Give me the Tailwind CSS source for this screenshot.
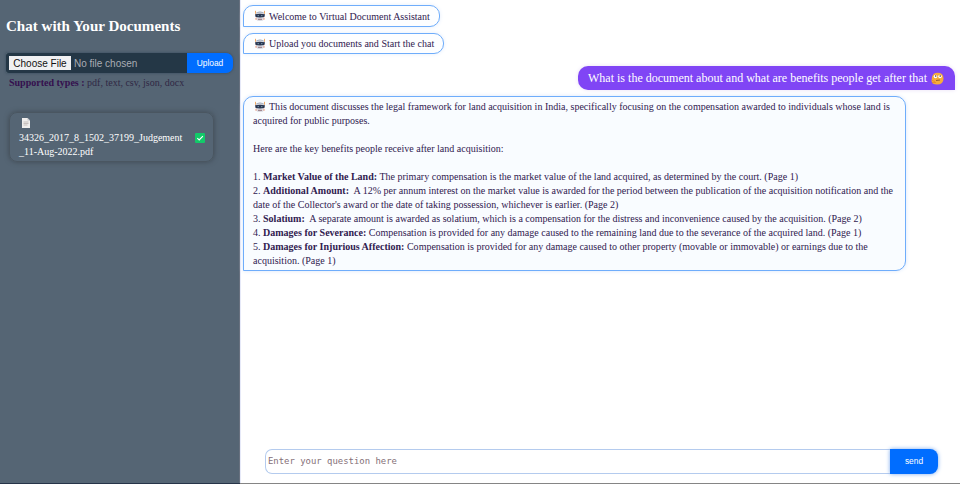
<!DOCTYPE html>
<html lang="en">
<head>
<meta charset="utf-8">
<title>Virtual Document Assistant</title>
<script src="https://cdn.jsdelivr.net/npm/@tailwindcss/browser@4"></script>
</head>
<body class="h-[484px] w-[960px] overflow-hidden bg-white font-['Liberation_Serif',serif] text-[#30204f]">
<svg class="hidden">
  <symbol id="robot" viewBox="0 0 12 12">
    <path d="M1.500 .8v3M10.500 .8v3" stroke="#eea968" stroke-width="1"/>
    <path d="M2 3.500Q2 1.500 6 1.500Q10 1.500 10 3.500V9.500Q9 11 6 11Q3 11 2 9.500Z" fill="#d9dbe2"/>
    <path d="M2.500 2.800Q6 1.200 9.500 2.800" stroke="#a9b2c0" fill="none"/>
    <path d="M1 4.200Q6 3.400 11 4.200L10.400 7Q6 7.800 1.600 7Z" fill="#2b3650"/>
    <circle cx="4.200" cy="5.600" r=".7" fill="#7fa9bd"/><circle cx="7.800" cy="5.600" r=".7" fill="#7fa9bd"/>
    <path d="M2 7.800v2M10 7.800v2" stroke="#f0a58c" stroke-width="1.200"/>
    <path d="M4 9.300h4" stroke="#8c6770" stroke-width=".9"/>
  </symbol>
</svg>
<div class="flex h-[483px]">
  <aside class="w-[240px] shrink-0 border-r border-[#68717f] bg-[#556574] pt-[16px] pl-[6px]">
    <h1 class="h-[20px] text-[15.05px] leading-[20px] font-bold whitespace-nowrap text-white">Chat with Your Documents</h1>
    <div class="mt-[17px] flex h-[20px] w-[227px] rounded-r-[7px] shadow-[0_0_3px_#34495b]">
      <div class="flex w-[181px] items-center rounded-l-[3px] bg-[#243746] pl-[3px] font-['Liberation_Sans',sans-serif] text-[10px] whitespace-nowrap">
        <span class="flex h-[14px] w-[62px] items-center justify-center bg-[#f0f0f2] pt-px text-[#111]">Choose File</span>
        <span class="mt-px ml-[3px] text-[#a9adb4]">No file chosen</span>
      </div>
      <button class="w-[46px] rounded-r-[7px] bg-[#006dff] font-['Liberation_Sans',sans-serif] text-[8.4px] text-white">Upload</button>
    </div>
    <p class="mt-[3px] ml-[3px] h-[14px] text-[10px] leading-[14px] whitespace-nowrap text-[#302844]"><b class="text-[#34104e]">Supported types :</b> pdf, text, csv, json, docx</p>
    <div class="mt-[22px] ml-[3px] flex h-[50px] w-[205px] items-center rounded-[8px] border border-[#4a5661] pt-[2px] pl-[9px] shadow-[0_0_5px_#3f4a53]">
      <div class="w-[164px] text-[10px] leading-[14px] whitespace-nowrap text-white">
        <div class="flex h-[14px] items-center pl-[3px]">
          <svg class="-mt-[2px] h-[10px] w-[8px]" viewBox="0 0 8 10"><path d="M0 0h5.500L8 2.500V10H0Z" fill="#f0eeed"/><path d="M5.500 0v2.500H8" fill="#c2c5cc"/><path d="M1.500 4h5M1.500 5.500h5M1.500 7h4" stroke="#b3aaa7" stroke-width=".7"/></svg>
        </div>
        <div>34326_2017_8_1502_37199_Judgement</div>
        <div>_11-Aug-2022.pdf</div>
      </div>
      <svg class="ml-[12px] h-[10px] w-[10px] shrink-0" viewBox="0 0 10 10"><rect width="10" height="10" rx="1" fill="#12c969"/><path d="M2.300 5.200 4.200 7 7.900 3.200" stroke="white" stroke-width="1.100" fill="none"/></svg>
    </div>
  </aside>
  <main class="flex flex-1 flex-col border-l border-[#e6e9f8] pt-[5px] pl-[2px]">
    <div class="flex h-[22px] w-[197px] items-center rounded-[10px] rounded-bl-none border border-[#6fadfb] bg-[#fdfeff] pl-[10px] text-[10.03px] whitespace-nowrap shadow-[0_0_4px_#e4edfb]"><svg class="mr-[3px] h-[12px] w-[12px] shrink-0"><use href="#robot"/></svg><span class="mt-px">Welcome to Virtual Document Assistant</span></div>
    <div class="mt-[6px] flex h-[21px] w-[201px] items-center rounded-[10px] rounded-bl-none border border-[#6fadfb] bg-[#fdfeff] pl-[10px] text-[10.03px] whitespace-nowrap shadow-[0_0_4px_#e4edfb]"><svg class="mr-[3px] h-[12px] w-[12px] shrink-0"><use href="#robot"/></svg><span>Upload you documents and Start the chat</span></div>
    <div class="mt-[12px] mr-[5px] flex h-[24px] w-[377px] items-center self-end rounded-[10px] rounded-br-none bg-[#8045f5] pl-[10px] text-[12.03px] whitespace-nowrap text-white shadow-[0_0_4px_#e8e0f6]">
      <span>What is the document about and what are benefits people get after that</span>
      <svg class="ml-[4px] h-[13px] w-[13px] shrink-0" viewBox="0 0 13 13"><path d="M1 5Q2 .7 6.500 .7Q12.500 .7 12.500 6.500Q12.500 12.500 6 12.500Q1 12.500 .5 9Z" fill="#f7ac39"/><circle cx="4.500" cy="4.500" r="1.800" fill="#fff"/><circle cx="9" cy="4.500" r="1.800" fill="#fff"/><circle cx="4.700" cy="4" r=".8" fill="#4b3231"/><circle cx="9.200" cy="4" r=".8" fill="#4b3231"/><path d="M5 8.500 9 8" stroke="#7f482b" stroke-width=".8"/><path d="M1 8.500 4 9.500M1 10.500h4" stroke="#e38b2d" stroke-width=".9"/></svg>
    </div>
    <div class="mt-[6px] h-[175px] w-[663px] rounded-[10px] rounded-bl-none border border-[#6fadfb] bg-[#f9fcff] pt-[3px] pl-[9px] text-[10.02px] leading-[14px] whitespace-nowrap shadow-[0_0_4px_#dbe7fa]">
      <div class="flex h-[14px] items-center pl-[1px]"><svg class="mr-[3px] h-[12px] w-[12px] shrink-0"><use href="#robot"/></svg><span>This document discusses the legal framework for land acquisition in India, specifically focusing on the compensation awarded to individuals whose land is</span></div>
      <div><span>acquired for public purposes.</span></div>
      <div class="mt-[14px]"><span>Here are the key benefits people receive after land acquisition:</span></div>
      <div class="mt-[14px]"><span>1. <b>Market Value of the Land:</b> The primary compensation is the market value of the land acquired, as determined by the court. (Page 1)</span></div>
      <div><span>2. <b>Additional Amount:</b>&nbsp; A 12% per annum interest on the market value is awarded for the period between the publication of the acquisition notification and the</span></div>
      <div><span>date of the Collector's award or the date of taking possession, whichever is earlier. (Page 2)</span></div>
      <div><span>3. <b>Solatium:</b>&nbsp; A separate amount is awarded as solatium, which is a compensation for the distress and inconvenience caused by the acquisition. (Page 2)</span></div>
      <div><span>4. <b>Damages for Severance:</b> Compensation is provided for any damage caused to the remaining land due to the severance of the acquired land. (Page 1)</span></div>
      <div><span>5. <b>Damages for Injurious Affection:</b> Compensation is provided for any damage caused to other property (movable or immovable) or earnings due to the</span></div>
      <div><span>acquisition. (Page 1)</span></div>
    </div>
    <div class="mt-auto mb-[8px] ml-[22px] flex h-[27px] w-[673px]">
      <div class="my-[1px] flex flex-1 items-center rounded-l-[7px] border border-r-0 border-[#b4cbee] pl-[2px] font-['DejaVu_Sans_Mono',monospace] text-[8.93px] text-[#857078]">Enter your question here</div>
      <button class="my-px w-[48px] rounded-r-[8px] bg-[#006dff] font-['Liberation_Sans',sans-serif] text-[8.4px] text-white shadow-[0_0_4px_#79a9ee]">send</button>
    </div>
  </main>
</div>
<div class="flex h-px bg-[#858585]"><div class="w-[240px] bg-[#263448]"></div></div>
</body>
</html>
